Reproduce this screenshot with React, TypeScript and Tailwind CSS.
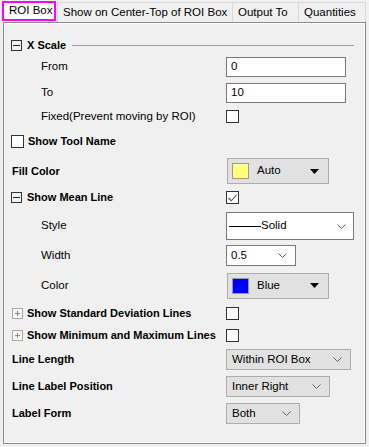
import React from 'react';

const FONT = { fontFamily: '"Liberation Sans", Arial, sans-serif' };

const Chevron = () => (
  <svg width="9" height="5" viewBox="0 0 9 5" className="flex-shrink-0">
    <path d="M0.5 0.5 L4.5 4.5 L8.5 0.5" fill="none" stroke="#606060" strokeWidth="1" />
  </svg>
);

const Triangle = () => (
  <svg width="9" height="5" viewBox="0 0 9 5" className="flex-shrink-0">
    <path d="M0 0 H9 L4.5 5 Z" fill="#000" />
  </svg>
);

const Check = ({ checked = false }: { checked?: boolean }) => (
  <div className="w-[13px] h-[13px] border border-[#333] bg-white flex items-center justify-center flex-shrink-0">
    {checked && (
      <svg width="9" height="8" viewBox="0 0 9 8">
        <path d="M0.5 4 L3.3 6.8 L8.5 1" fill="none" stroke="#555" strokeWidth="1.1" />
      </svg>
    )}
  </div>
);

const Toggle = ({ open }: { open: boolean }) =>
  open ? (
    <div className="w-[11px] h-[11px] border border-[#333] flex items-center justify-center flex-shrink-0">
      <div className="w-[7px] h-px bg-[#222]" />
    </div>
  ) : (
    <div className="w-[11px] h-[11px] border border-[#a9a9a9] relative flex-shrink-0 bg-[#f6f6f6]">
      <div className="absolute left-[2px] top-[4px] w-[5px] h-px bg-[#8a8a8a]" />
      <div className="absolute left-[4px] top-[2px] w-px h-[5px] bg-[#8a8a8a]" />
    </div>
  );

const ColorCombo = ({ color, label }: { color: string; label: string }) => (
  <div className="w-[102px] h-[26px] border border-[#adadad] bg-[#e1e1e1] flex items-center pl-[4px] pr-[9px]">
    <div className="w-[17px] h-[16px] border border-[#9a9a9a]" style={{ backgroundColor: color }} />
    <span className="ml-[8px] flex-1">{label}</span>
    <Triangle />
  </div>
);

const GrayCombo = ({ w, label }: { w: string; label: string }) => (
  <div className={`${w} h-[21px] border border-[#adadad] bg-[#e1e1e1] flex items-center pl-[5px] pr-[8px]`}>
    <span className="flex-1 whitespace-nowrap">{label}</span>
    <Chevron />
  </div>
);

const Row = ({
  className,
  left,
  children,
}: {
  className: string;
  left: React.ReactNode;
  children?: React.ReactNode;
}) => (
  <div className={`flex items-center ${className}`}>
    <div className="w-[215px] flex items-center flex-shrink-0 whitespace-nowrap">{left}</div>
    {children}
  </div>
);

const Bold = ({ children, className = '' }: { children: React.ReactNode; className?: string }) => (
  <span className={`font-bold text-[11px] ${className}`}>{children}</span>
);

export default function App() {
  const tabs = [
    { t: 'Show on Center-Top of ROI Box', w: 'w-[176px]' },
    { t: 'Output To', w: 'w-[66px]' },
    { t: 'Quantities', w: 'w-[67px]' },
  ];
  return (
    <div className="w-[369px] h-[447px] bg-[#f0f0f0] text-[11.5px] text-black relative whitespace-nowrap" style={FONT}>
      <div className="flex h-[22px] pl-[2px] pt-[1px] items-end">
        <div className="h-[20px] w-[54px] border-2 border-[#ff00ff] bg-white flex items-center pl-[5px] z-10 mb-[1px]">
          ROI Box
        </div>
        <div className="flex h-[20px] ml-[1px]">
          {tabs.map((t, i) => (
            <div
              key={t.t}
              className={`h-[20px] border border-[#d9d9d9] border-b-0 flex items-center px-[5px] bg-[#f0f0f0] ${t.w} ${
                i > 0 ? 'border-l-0' : ''
              }`}
            >
              {t.t}
            </div>
          ))}
        </div>
      </div>

      <div className="mx-[3px] w-[363px] h-[422px] border border-[#8a8a8a] shadow-[inset_1px_1px_0_#fff,inset_-1px_-1px_0_#fff] pl-[7px]">
        {/* X Scale */}
        <div className="flex items-center h-[14px] mt-[15px]">
          <Toggle open />
          <Bold className="ml-[5px]">X Scale</Bold>
          <div className="ml-[6px] flex-1 mr-[11px] h-px bg-[#a0a0a0]" />
        </div>
        <Row className="h-[20px] mt-[5px]" left={<span className="pl-[30px]">From</span>}>
          <div className="w-[120px] h-[20px] border border-[#7a7a7a] bg-white flex items-center pl-[4px]">0</div>
        </Row>
        <Row className="h-[20px] mt-[6px]" left={<span className="pl-[30px]">To</span>}>
          <div className="w-[120px] h-[20px] border border-[#7a7a7a] bg-white flex items-center pl-[4px]">10</div>
        </Row>
        <Row className="h-[13px] mt-[7px]" left={<span className="pl-[30px]">Fixed(Prevent moving by ROI)</span>}>
          <Check />
        </Row>
        <div className="flex items-center h-[13px] mt-[12px]">
          <Check />
          <Bold className="ml-[4px]">Show Tool Name</Bold>
        </div>
        <Row className="h-[26px] mt-[10px]" left={<Bold className="pl-[1px]">Fill Color</Bold>}>
          <div className="ml-[1px]">
            <ColorCombo color="#ffff80" label="Auto" />
          </div>
        </Row>
        <Row
          className="h-[13px] mt-[7px]"
          left={
            <>
              <Toggle open />
              <Bold className="ml-[5px]">Show Mean Line</Bold>
            </>
          }
        >
          <Check checked />
        </Row>
        <Row className="h-[28px] mt-[8px]" left={<span className="pl-[30px]">Style</span>}>
          <div className="w-[128px] h-[28px] border border-[#7a7a7a] bg-white flex items-center pl-[2px] pr-[7px]">
            <div className="w-[32px] h-px bg-black" />
            <span className="flex-1">Solid</span>
            <Chevron />
          </div>
        </Row>
        <Row className="h-[21px] mt-[5px]" left={<span className="pl-[30px]">Width</span>}>
          <div className="w-[70px] h-[21px] border border-[#7a7a7a] bg-white flex items-center pl-[4px] pr-[8px]">
            <span className="flex-1">0.5</span>
            <Chevron />
          </div>
        </Row>
        <Row className="h-[25px] mt-[7px]" left={<span className="pl-[30px]">Color</span>}>
          <div className="ml-[1px]">
            <ColorCombo color="#0000ff" label="Blue" />
          </div>
        </Row>
        <Row
          className="h-[13px] mt-[9px]"
          left={
            <>
              <div className="ml-[1px]">
                <Toggle open={false} />
              </div>
              <Bold className="ml-[4px]">Show Standard Deviation Lines</Bold>
            </>
          }
        >
          <Check />
        </Row>
        <Row
          className="h-[13px] mt-[9px]"
          left={
            <>
              <div className="ml-[1px]">
                <Toggle open={false} />
              </div>
              <Bold className="ml-[4px]">Show Minimum and Maximum Lines</Bold>
            </>
          }
        >
          <Check />
        </Row>
        <Row className="h-[21px] mt-[7px]" left={<Bold className="pl-[1px]">Line Length</Bold>}>
          <GrayCombo w="w-[125px]" label="Within ROI Box" />
        </Row>
        <Row className="h-[21px] mt-[6px]" left={<Bold className="pl-[1px]">Line Label Position</Bold>}>
          <GrayCombo w="w-[104px]" label="Inner Right" />
        </Row>
        <Row className="h-[21px] mt-[6px]" left={<Bold className="pl-[1px]">Label Form</Bold>}>
          <GrayCombo w="w-[74px]" label="Both" />
        </Row>
      </div>
    </div>
  );
}
